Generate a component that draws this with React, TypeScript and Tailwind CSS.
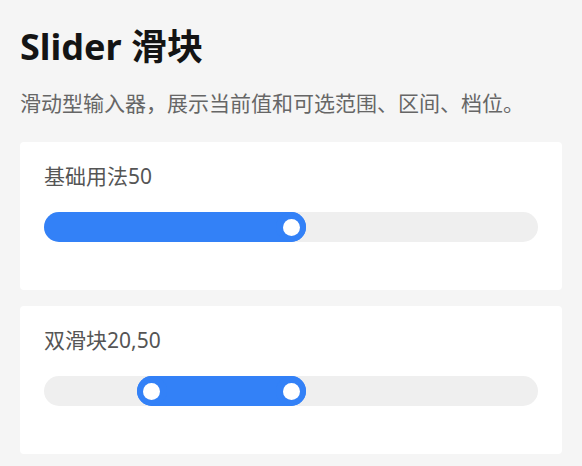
import React from "react";

function Track({ lo, hi }: { lo: number; hi: number }) {
  const pos = (p: number) => `calc(${p / 100} * (100% - 30px))`;
  const thumbs = lo === 0 ? [hi] : [lo, hi];
  return (
    <div className="relative h-[30px] w-full rounded-full bg-[#efefef]">
      <div
        className="absolute top-0 h-full rounded-full bg-[#3381f7]"
        style={{
          left: pos(lo),
          width: `calc(${(hi - lo) / 100} * (100% - 30px) + 30px)`,
        }}
      />
      {thumbs.map((t, i) => (
        <div
          key={i}
          className="absolute top-0 flex h-[30px] w-[30px] items-center justify-center rounded-full bg-[#3381f7]"
          style={{ left: pos(t) }}
        >
          <div className="h-[17px] w-[17px] rounded-full bg-white" />
        </div>
      ))}
    </div>
  );
}

function Card({ label, lo, hi }: { label: string; lo: number; hi: number }) {
  return (
    <div className="rounded-[4px] bg-white px-6 pt-5 pb-[48px]">
      <div className="text-[21px] leading-[28px] text-[#555555]">{label}</div>
      <div className="mt-[22px]">
        <Track lo={lo} hi={hi} />
      </div>
    </div>
  );
}

export default function App() {
  return (
    <div
      className="min-h-screen bg-[#f5f5f5] px-5 pt-[24px]"
      style={{ fontFamily: '"Noto Sans", "Noto Sans CJK SC", sans-serif' }}
    >
      <h1 className="text-[36px] font-bold leading-[46px] text-[#141414]">Slider 滑块</h1>
      <p className="mt-[19px] text-[21px] leading-[28px] text-[#666666]">
        滑动型输入器，展示当前值和可选范围、区间、档位。
      </p>
      <div className="mt-[25px] flex flex-col gap-4">
        <Card label="基础用法50" lo={0} hi={50} />
        <Card label="双滑块20,50" lo={20} hi={50} />
      </div>
    </div>
  );
}
